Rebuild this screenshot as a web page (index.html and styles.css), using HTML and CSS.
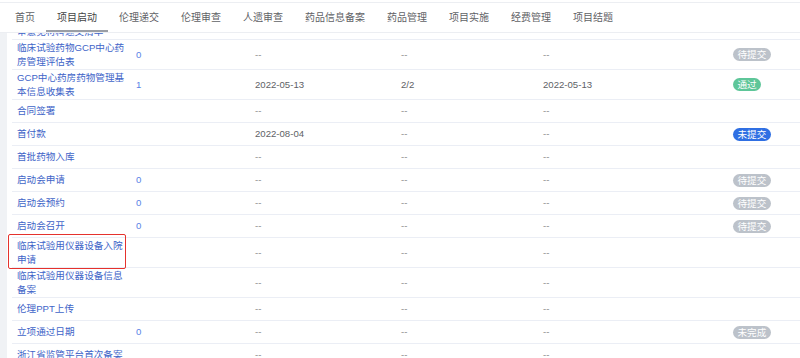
FILE: index.html
```html
<!DOCTYPE html>
<html lang="zh-CN">
<head>
    <meta charset="UTF-8">
    <meta name="viewport" content="width=device-width, initial-scale=1.0">
    <title>项目启动</title>
    <link rel="stylesheet" href="styles.css">
</head>
<body>
    <nav class="tabs">
        <span class="tab">首页</span>
        <span class="tab active">项目启动</span>
        <span class="tab">伦理递交</span>
        <span class="tab">伦理审查</span>
        <span class="tab">人遗审查</span>
        <span class="tab">药品信息备案</span>
        <span class="tab">药品管理</span>
        <span class="tab">项目实施</span>
        <span class="tab">经费管理</span>
        <span class="tab">项目结题</span>
    </nav>

    <div class="page">
        <div class="table-scroll">
            <div class="table">
                <!-- partly scrolled out of view -->
                <div class="row">
                    <div class="cell name">项目立项审批表及伦理初审意见材料递交清单</div>
                    <div class="cell"></div>
                    <div class="cell"></div>
                    <div class="cell"></div>
                    <div class="cell"></div>
                    <div class="cell"></div>
                </div>
                <div class="row">
                    <div class="cell name">临床试验药物GCP中心药房管理评估表</div>
                    <div class="cell num">0</div>
                    <div class="cell dash">--</div>
                    <div class="cell dash">--</div>
                    <div class="cell dash">--</div>
                    <div class="cell"><span class="badge gray">待提交</span></div>
                </div>
                <div class="row">
                    <div class="cell name">GCP中心药房药物管理基本信息收集表</div>
                    <div class="cell num">1</div>
                    <div class="cell val">2022-05-13</div>
                    <div class="cell val">2/2</div>
                    <div class="cell val">2022-05-13</div>
                    <div class="cell"><span class="badge green">通过</span></div>
                </div>
                <div class="row">
                    <div class="cell name">合同签署</div>
                    <div class="cell num"></div>
                    <div class="cell dash">--</div>
                    <div class="cell dash">--</div>
                    <div class="cell dash">--</div>
                    <div class="cell"></div>
                </div>
                <div class="row">
                    <div class="cell name">首付款</div>
                    <div class="cell num"></div>
                    <div class="cell val">2022-08-04</div>
                    <div class="cell dash">--</div>
                    <div class="cell dash">--</div>
                    <div class="cell"><span class="badge blue">未提交</span></div>
                </div>
                <div class="row">
                    <div class="cell name">首批药物入库</div>
                    <div class="cell num"></div>
                    <div class="cell dash">--</div>
                    <div class="cell dash">--</div>
                    <div class="cell dash">--</div>
                    <div class="cell"></div>
                </div>
                <div class="row">
                    <div class="cell name">启动会申请</div>
                    <div class="cell num">0</div>
                    <div class="cell dash">--</div>
                    <div class="cell dash">--</div>
                    <div class="cell dash">--</div>
                    <div class="cell"><span class="badge gray">待提交</span></div>
                </div>
                <div class="row">
                    <div class="cell name">启动会预约</div>
                    <div class="cell num">0</div>
                    <div class="cell dash">--</div>
                    <div class="cell dash">--</div>
                    <div class="cell dash">--</div>
                    <div class="cell"><span class="badge gray">待提交</span></div>
                </div>
                <div class="row">
                    <div class="cell name">启动会召开</div>
                    <div class="cell num">0</div>
                    <div class="cell dash">--</div>
                    <div class="cell dash">--</div>
                    <div class="cell dash">--</div>
                    <div class="cell"><span class="badge gray">待提交</span></div>
                </div>
                <div class="row">
                    <div class="cell name marked">临床试验用仪器设备入院申请</div>
                    <div class="cell num"></div>
                    <div class="cell dash">--</div>
                    <div class="cell dash">--</div>
                    <div class="cell dash">--</div>
                    <div class="cell"></div>
                </div>
                <div class="row">
                    <div class="cell name">临床试验用仪器设备信息备案</div>
                    <div class="cell num"></div>
                    <div class="cell dash">--</div>
                    <div class="cell dash">--</div>
                    <div class="cell dash">--</div>
                    <div class="cell"></div>
                </div>
                <div class="row">
                    <div class="cell name">伦理PPT上传</div>
                    <div class="cell num"></div>
                    <div class="cell dash">--</div>
                    <div class="cell dash">--</div>
                    <div class="cell dash">--</div>
                    <div class="cell"></div>
                </div>
                <div class="row">
                    <div class="cell name">立项通过日期</div>
                    <div class="cell num">0</div>
                    <div class="cell dash">--</div>
                    <div class="cell dash">--</div>
                    <div class="cell dash">--</div>
                    <div class="cell"><span class="badge gray">未完成</span></div>
                </div>
                <div class="row">
                    <div class="cell name">浙江省监管平台首次备案</div>
                    <div class="cell num"></div>
                    <div class="cell dash">--</div>
                    <div class="cell dash">--</div>
                    <div class="cell dash">--</div>
                    <div class="cell"></div>
                </div>
            </div>
        </div>
    </div>
</body>
</html>
```

FILE: styles.css
```css
html, body {
    margin: 0;
    height: 100%;
    overflow: hidden;
}
body {
    font-family: "Liberation Sans", "Noto Sans CJK SC", sans-serif;
    background: #fff;
    color: #666;
    padding-top: 2px;
    box-sizing: border-box;
    display: flex;
    flex-direction: column;
}

/* top tabs */
.tabs {
    display: flex;
    height: 29px;
    padding-left: 4px;
    border-top: 1px solid #eceef2;
    border-bottom: 1px solid #eceef2;
    flex-shrink: 0;
}
.tab {
    position: relative;
    padding: 0 11px;
    font-size: 10px;
    line-height: 29px;
    color: #5f6266;
}
.tab.active {
    color: #444;
}
.tab.active::after {
    content: "";
    position: absolute;
    left: 0;
    right: 0;
    bottom: 0;
    height: 2px;
    background: #9a9ea5;
}

/* page body */
.page {
    flex: 1;
    min-height: 0;
    background: #f0f2f5;
    padding-left: 7px;
}
.table-scroll {
    height: 100%;
    overflow: hidden;
    background: #fff;
    padding-left: 5px;
}
.table {
    margin-top: -23px;
    font-size: 9.6px;
}
.row {
    display: grid;
    grid-template-columns: 119px 119px 146px 142px 190px 1fr;
    border-bottom: 1px solid #ebeef5;
}
.cell {
    display: flex;
    align-items: center;
    min-height: 22px;
    padding: 0.5px 5px;
    line-height: 14px;
    box-sizing: border-box;
}
.name {
    color: #3e64c8;
    position: relative;
}
.num {
    color: #5a83e6;
}
.val {
    color: #606266;
}
.dash {
    color: #8c8c8c;
}
.marked::after {
    content: "";
    position: absolute;
    top: -4px;
    left: -4px;
    right: 5px;
    bottom: -2px;
    border: 1.5px solid #e5322d;
    border-radius: 2px;
}

.badge {
    display: inline-block;
    height: 13px;
    line-height: 13px;
    padding: 0 4.5px;
    border-radius: 7px;
    color: #fff;
}
.gray { background: #bcc2ca; }
.green { background: #5ec699; }
.blue { background: #2f6fe3; }
```
